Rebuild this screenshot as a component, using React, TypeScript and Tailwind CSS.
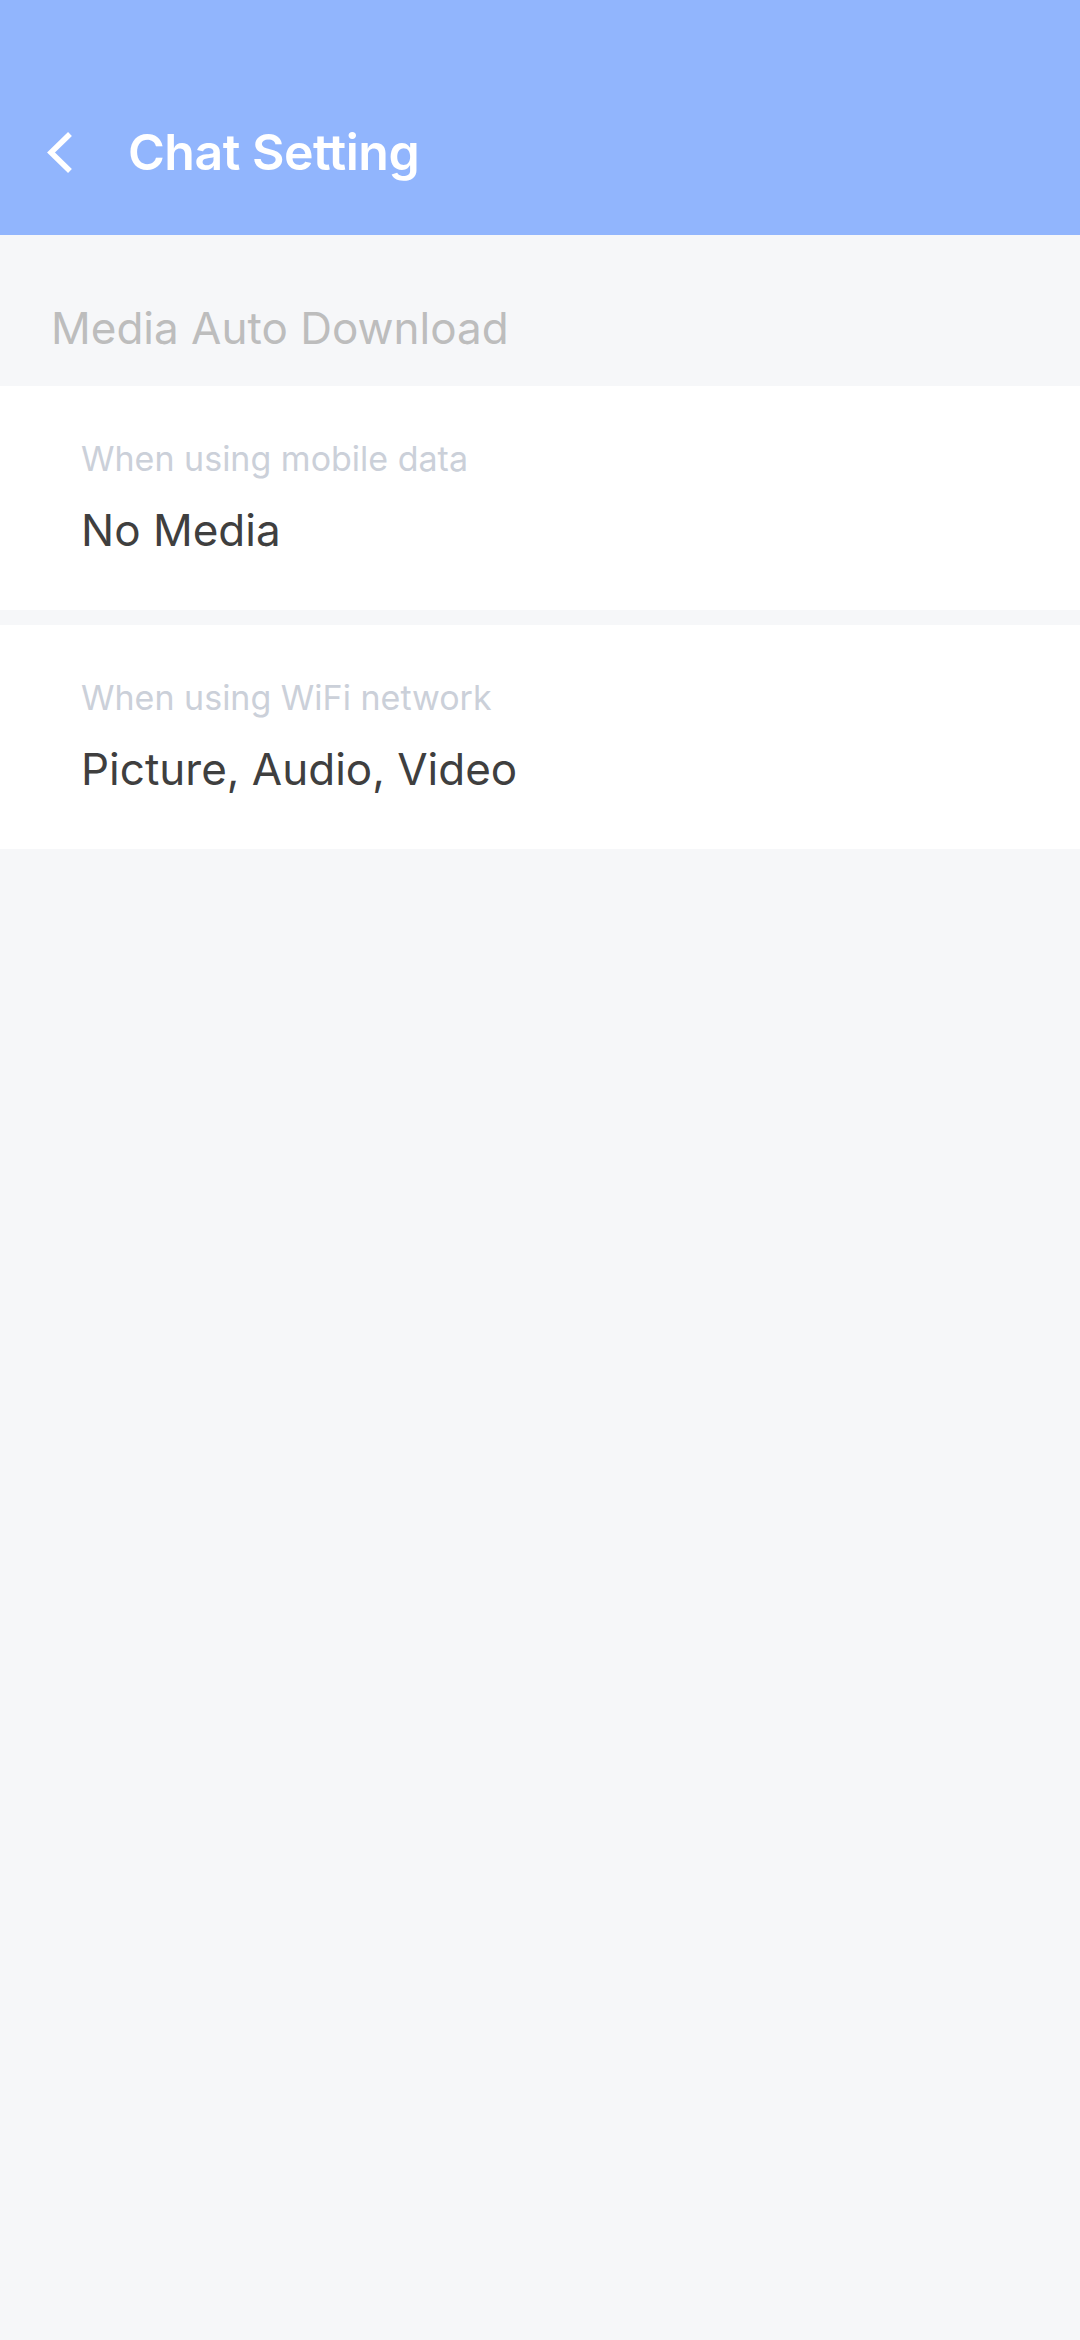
import type { JSX } from "react"

const SettingCard = ({ label, value }: { label: string; value: string }): JSX.Element => {
    return (
        <div className="bg-white h-[224px] px-[81px] pt-[53px] flex flex-col">
            <span className="text-[34px] leading-[40px] text-[#cbd0d9]">{label}</span>
            <span className="mt-[25px] text-[44px] leading-[52px] text-[#3f3f3f]">{value}</span>
        </div>
    )
}

const App = (): JSX.Element => {
    return (
        <div className="w-full min-h-[2340px] bg-[#f6f7f9] font-['Inter',sans-serif]">
            {/* header */}
            <header className="h-[235px] bg-[#91b5fd] pt-[70px] flex items-center">
                <button className="ml-[45px] w-[28px] h-[42px] flex items-center justify-center">
                    <svg width="28" height="42" viewBox="0 0 28 42" fill="none">
                        <path d="M23 4 L6 20.5 L23 37" stroke="white" strokeWidth="5.5" strokeLinecap="square" />
                    </svg>
                </button>
                <h1 className="ml-[55px] text-[50px] font-semibold text-white tracking-[-0.5px]">Chat Setting</h1>
            </header>

            {/* section title */}
            <div className="h-[151px] pt-[34px] px-[51px] flex items-center">
                <span className="text-[44px] text-[#bdbdbd]">Media Auto Download</span>
            </div>

            <div className="flex flex-col gap-[15px]">
                <SettingCard label="When using mobile data" value="No Media" />
                <SettingCard label="When using WiFi network" value="Picture, Audio, Video" />
            </div>
        </div>
    )
}

export default App
